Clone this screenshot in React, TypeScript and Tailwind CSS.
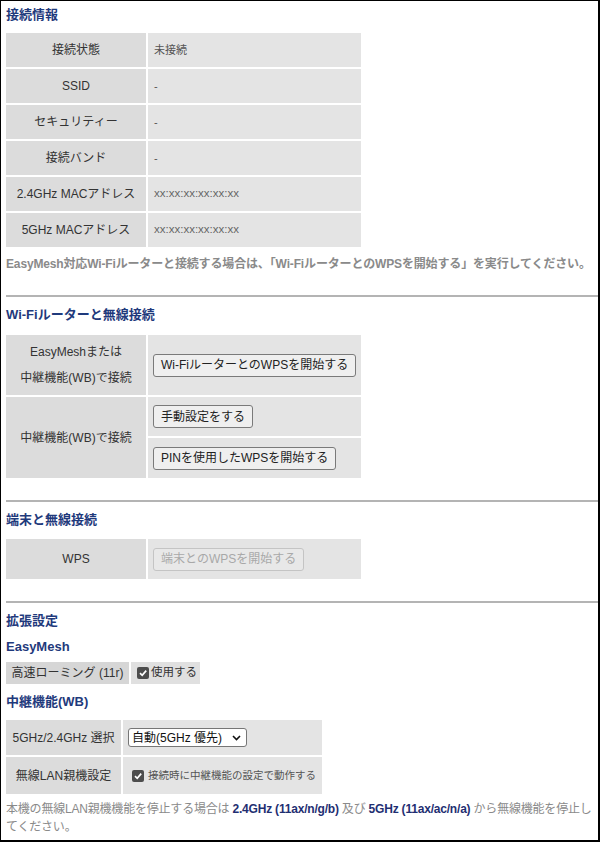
import React from "react";

const font = {
  fontFamily: '"Liberation Sans", "Noto Sans CJK JP", sans-serif',
};

function Heading({ children }: { children: React.ReactNode }) {
  return (
    <h3 className="text-[13px] font-bold text-[#1f3a7c] leading-[16px]">
      {children}
    </h3>
  );
}

function Btn({
  children,
  disabled,
}: {
  children: React.ReactNode;
  disabled?: boolean;
}) {
  return (
    <button
      className={
        disabled
          ? "h-[23px] px-[7px] whitespace-nowrap text-[12px] text-[#a8a8a8] bg-[#e8e8e8] border border-[#c4c4c4] rounded-[3px] leading-none"
          : "h-[23px] px-[7px] whitespace-nowrap text-[12px] text-[#222] bg-[#efefef] border border-[#7a7a7a] rounded-[3px] leading-none"
      }
    >
      {children}
    </button>
  );
}

function Check() {
  return (
    <span className="inline-flex shrink-0 items-center justify-center w-[12px] h-[12px] bg-[#4d4d4d] rounded-[2px]">
      <svg width="10" height="10" viewBox="0 0 10 10">
        <path
          d="M2 5.2 L4.2 7.3 L8.2 2.6"
          fill="none"
          stroke="white"
          strokeWidth="1.7"
        />
      </svg>
    </span>
  );
}

const infoRows: [string, string, boolean?][] = [
  ["接続状態", "未接続"],
  ["SSID", "-"],
  ["セキュリティー", "-"],
  ["接続バンド", "-"],
  ["2.4GHz MACアドレス", "xx:xx:xx:xx:xx:xx", true],
  ["5GHz MACアドレス", "xx:xx:xx:xx:xx:xx", true],
];

export default function App() {
  return (
    <div
      style={font}
      className="w-[600px] h-[842px] bg-white border-t border-l border-r-2 border-b-2 border-black overflow-hidden text-[#333]"
    >
      <div className="pl-[5px] pt-[6px]">
        <Heading>接続情報</Heading>
        <div className="mt-[10px] grid grid-cols-[140px_213px] gap-[2px] w-[355px]">
          {infoRows.map(([k, v, mac]) => (
            <React.Fragment key={k}>
              <div className="h-[34px] bg-[#dcdcdc] flex items-center justify-center text-[12px] whitespace-nowrap">
                {k}
              </div>
              <div
                className={
                  mac
                    ? "h-[34px] bg-[#e4e4e4] flex items-center pl-[6px] text-[11.5px] text-[#666]"
                    : "h-[34px] bg-[#e4e4e4] flex items-center pl-[6px] text-[11px] text-[#555]"
                }
              >
                {v}
              </div>
            </React.Fragment>
          ))}
        </div>
        <p className="mt-[9px] text-[12px] font-bold text-[#8a8a8a] leading-[16px] whitespace-nowrap tracking-[-0.15px]">
          EasyMesh対応Wi-Fiルーターと接続する場合は、「Wi-FiルーターとのWPSを開始する」を実行してください。
        </p>
        <div className="mt-[23px] h-[2px] bg-[#b4b4b4]" />

        <div className="mt-[10px]">
          <Heading>Wi-Fiルーターと無線接続</Heading>
        </div>
        <div className="mt-[12px] grid grid-cols-[140px_213px] gap-[2px] w-[355px]">
          <div className="h-[60px] bg-[#dcdcdc] flex flex-col items-center justify-center text-[12px] leading-[26px]">
            <span>EasyMeshまたは</span>
            <span>中継機能(WB)で接続</span>
          </div>
          <div className="h-[60px] bg-[#e4e4e4] flex items-center pl-[5px]">
            <Btn>Wi-FiルーターとのWPSを開始する</Btn>
          </div>
          <div className="bg-[#dcdcdc] flex items-center justify-center text-[12px]">
            中継機能(WB)で接続
          </div>
          <div className="flex flex-col gap-[2px]">
            <div className="h-[39px] bg-[#e4e4e4] flex items-center pl-[5px]">
              <Btn>手動設定をする</Btn>
            </div>
            <div className="h-[40px] bg-[#e4e4e4] flex items-center pl-[5px]">
              <Btn>PINを使用したWPSを開始する</Btn>
            </div>
          </div>
        </div>
        <div className="mt-[22px] h-[2px] bg-[#b4b4b4]" />

        <div className="mt-[10px]">
          <Heading>端末と無線接続</Heading>
        </div>
        <div className="mt-[11px] grid grid-cols-[140px_213px] gap-[2px] w-[355px]">
          <div className="h-[40px] bg-[#dcdcdc] flex items-center justify-center text-[12px]">
            WPS
          </div>
          <div className="h-[40px] bg-[#e4e4e4] flex items-center pl-[5px]">
            <Btn disabled>端末とのWPSを開始する</Btn>
          </div>
        </div>
        <div className="mt-[22px] h-[2px] bg-[#b4b4b4]" />

        <div className="mt-[10px]">
          <Heading>拡張設定</Heading>
        </div>
        <div className="mt-[10px]">
          <Heading>EasyMesh</Heading>
        </div>
        <div className="mt-[7px] flex gap-[2px]">
          <div className="h-[22px] w-[123px] bg-[#d6d6d6] flex items-center justify-center text-[12px] whitespace-nowrap">
            高速ローミング (11r)
          </div>
          <div className="h-[22px] bg-[#e0e0e0] flex items-center pl-[6px] pr-[3px] gap-[2px] text-[11.5px] whitespace-nowrap">
            <Check />
            <span>使用する</span>
          </div>
        </div>
        <div className="mt-[10px]">
          <Heading>中継機能(WB)</Heading>
        </div>
        <div className="mt-[10px] grid grid-cols-[115px_199px] gap-[2px] w-[316px]">
          <div className="h-[35px] bg-[#dcdcdc] flex items-center justify-center text-[12px] whitespace-nowrap">
            5GHz/2.4GHz 選択
          </div>
          <div className="h-[35px] bg-[#e4e4e4] flex items-center pl-[5px]">
            <div className="h-[19px] w-[119px] bg-white border border-[#767676] rounded-[3px] flex items-center justify-between pl-[3px] pr-[5px] text-[12px] text-[#111] whitespace-nowrap">
              <span>自動(5GHz 優先)</span>
              <svg width="9" height="6" viewBox="0 0 9 6">
                <path
                  d="M1 1 L4.5 4.5 L8 1"
                  fill="none"
                  stroke="#111"
                  strokeWidth="1.6"
                />
              </svg>
            </div>
          </div>
          <div className="h-[37px] bg-[#dcdcdc] flex items-center justify-center text-[12px] whitespace-nowrap">
            無線LAN親機設定
          </div>
          <div className="h-[37px] bg-[#e4e4e4] flex items-center pl-[9px] gap-[4px] text-[10.5px] text-[#555] whitespace-nowrap">
            <Check />
            <span>接続時に中継機能の設定で動作する</span>
          </div>
        </div>
        <p className="mt-[6px] pr-[6px] text-[12px] text-[#8a8a8a] leading-[18px] tracking-[-0.2px]">
          本機の無線LAN親機機能を停止する場合は{" "}
          <b className="text-[#1f2f72]">2.4GHz (11ax/n/g/b)</b> 及び{" "}
          <b className="text-[#1f2f72]">5GHz (11ax/ac/n/a)</b>{" "}
          から無線機能を停止してください。
        </p>
      </div>
    </div>
  );
}
